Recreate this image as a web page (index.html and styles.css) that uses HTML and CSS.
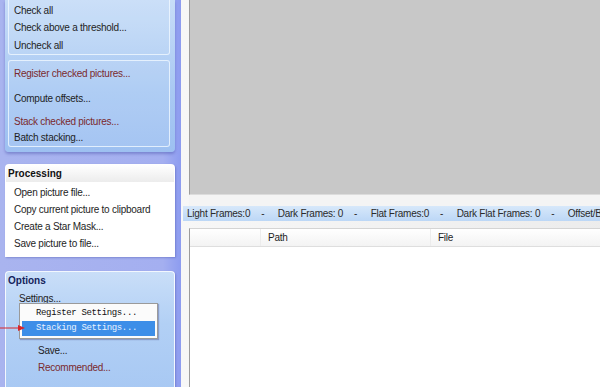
FILE: index.html
```html
<!DOCTYPE html>
<html lang="en">
<head>
    <meta charset="UTF-8">
    <title>Stacking</title>
    <link rel="stylesheet" href="styles.css">
</head>
<body>
    <div class="app">
        <aside class="sidebar">
            <div class="group">
                <div class="subbox first">
                    <div class="item">Check all</div>
                    <div class="item">Check above a threshold...</div>
                    <div class="item gap1">Uncheck all</div>
                </div>
                <div class="subbox second">
                    <div class="item red">Register checked pictures...</div>
                    <div class="item gap8">Compute offsets...</div>
                    <div class="item red gap6">Stack checked pictures...</div>
                    <div class="item tight">Batch stacking...</div>
                </div>
            </div>

            <div class="panel processing">
                <div class="panel-head">Processing</div>
                <div class="panel-body">
                    <div class="item">Open picture file...</div>
                    <div class="item">Copy current picture to clipboard</div>
                    <div class="item">Create a Star Mask...</div>
                    <div class="item">Save picture to file...</div>
                </div>
            </div>

            <div class="panel options">
                <div class="panel-head navy">Options</div>
                <div class="panel-body">
                    <div class="item settings">Settings...</div>
                    <div class="item sub save">Save...</div>
                    <div class="item sub red">Recommended...</div>
                </div>

                <!-- popup menu opened from Settings... -->
                <div class="popup">
                    <div class="popup-item">Register Settings...</div>
                    <div class="popup-item active">Stacking Settings...</div>
                </div>
                <svg class="arrow" width="26" height="8" viewBox="0 0 26 8">
                    <line x1="0" y1="4" x2="20" y2="4" stroke="#d8262a" stroke-width="1"/>
                    <polygon points="18,1 25,4 18,7" fill="#d8262a"/>
                </svg>
            </div>
        </aside>

        <main class="main">
            <div class="viewer"></div>
            <div class="splitter"></div>
            <div class="status">
                <span>Light Frames:0</span><span class="dash">-</span>
                <span>Dark Frames: 0</span><span class="dash">-</span>
                <span>Flat Frames:0</span><span class="dash">-</span>
                <span>Dark Flat Frames: 0</span><span class="dash">-</span>
                <span>Offset/Bias</span>
            </div>
            <div class="list">
                <div class="list-head">
                    <div class="col c0"></div>
                    <div class="col c1">Path</div>
                    <div class="col c2">File</div>
                </div>
            </div>
        </main>
    </div>
</body>
</html>
```

FILE: styles.css
```css
/* Layout général */
body {
    margin: 0;
    font-family: "Liberation Sans", Arial, sans-serif;
    font-size: 10px;
    letter-spacing: -0.25px;
    color: #1e1e1e;
    overflow: hidden;
}

.app {
    display: flex;
    width: 600px;
    height: 387px;
    overflow: hidden;
}

/* Barre latérale */
.sidebar {
    width: 181px;
    flex-shrink: 0;
    padding: 0 6px 0 5px;
    box-sizing: border-box;
    background: linear-gradient(to right, #a9b4ef, #a4aff0 90%, #8d9cf0);
    position: relative;
}

.item {
    line-height: 17px;
    height: 17px;
    white-space: nowrap;
}

.red {
    color: #7a2a2e;
}

.group {
    background: linear-gradient(to bottom, #c7ddf8, #a9c9f3 60%, #9dc0f1);
    padding: 0 5px 5px 3px;
    border-radius: 0 0 4px 4px;
    box-shadow: 0 2px 3px rgba(70, 80, 170, 0.45);
}

.subbox {
    border: 1px solid rgba(240, 248, 255, 0.8);
    border-radius: 3px;
    padding-left: 5px;
    background: rgba(255, 255, 255, 0.08);
}

.subbox.first {
    border-top: none;
    border-radius: 0 0 3px 3px;
    padding-top: 2px;
}

.subbox.second {
    margin-top: 5px;
    padding-top: 4px;
}

.gap1 { margin-top: 1px; }
.gap8 { margin-top: 8px; }
.gap6 { margin-top: 6px; }
.tight { margin-top: -1px; }

/* Panneaux */
.panel {
    margin-top: 12px;
    border: 1px solid rgba(255, 255, 255, 0.85);
    border-bottom: none;
    border-radius: 4px 4px 0 0;
    box-shadow: 1px 1px 2px rgba(70, 80, 170, 0.4);
}

.panel-head {
    height: 17px;
    line-height: 17px;
    padding-left: 2px;
    font-weight: bold;
    letter-spacing: 0;
    color: #111;
}

.panel-head.navy {
    color: #14235c;
}

.processing {
    background: #fff;
    border-radius: 4px 4px 0 0;
}

.processing .panel-head {
    background: linear-gradient(to bottom, #ffffff, #ececec);
}

.processing .panel-body {
    padding: 2px 0 5px 8px;
}

.options {
    position: relative;
    margin-top: 14px;
    height: 130px;
    background: linear-gradient(to bottom, #c9def8, #b2d0f5 40%, #a6c7f3);
}

.options .panel-body {
    padding-top: 1px;
}

.settings {
    padding-left: 13px;
}

.sub {
    padding-left: 32px;
}

.save {
    margin-top: 35px;
}

/* Menu contextuel */
.popup {
    position: absolute;
    left: 13px;
    top: 31px;
    width: 133px;
    padding: 2px;
    background: #fbfbfb;
    border: 1px solid #9a9a9a;
    box-shadow: 1px 1px 1px rgba(60, 60, 120, 0.35);
}

.popup-item {
    height: 15px;
    line-height: 15px;
    padding-left: 14px;
    font-family: "Liberation Mono", "Courier New", monospace;
    font-size: 9px;
    letter-spacing: -0.35px;
    color: #111;
}

.popup-item.active {
    background: #3d8ee8;
    color: #e8f2ff;
}

.arrow {
    position: absolute;
    left: -6px;
    top: 52px;
}

/* Zone principale */
.main {
    flex: 1;
    display: flex;
    flex-direction: column;
    padding-left: 2px;
    background: linear-gradient(to right, #f7f7f7, #ececec);
}

.viewer {
    height: 194px;
    margin-left: 6px;
    background: #c8c8c8;
    border-left: 1px solid #9c9c9c;
    border-bottom: 1px solid #dcdcdc;
}

.splitter {
    height: 11px;
    margin-left: 6px;
    background: #f4f4f4;
}

.status {
    height: 15px;
    line-height: 15px;
    padding-left: 4px;
    white-space: nowrap;
    overflow: hidden;
    color: #2a2a2a;
    background: linear-gradient(to bottom, #d7e8fa, #bcd7f6);
}

.status .dash {
    display: inline-block;
    width: 25px;
    text-align: center;
}

.list {
    flex: 1;
    margin: 7px 0 0 6px;
    background: #fff;
    border-left: 1px solid #9c9c9c;
    border-top: 1px solid #d4d4d4;
}

.list-head {
    display: flex;
    height: 17px;
    line-height: 17px;
    background: linear-gradient(to bottom, #ffffff, #f3f3f3);
    border-bottom: 1px solid #dedede;
}

.col {
    border-right: 1px solid #ececec;
    padding-left: 7px;
    box-sizing: border-box;
}

.c0 { width: 71px; }
.c1 { width: 170px; }
.c2 { flex: 1; border-right: none; }
```
